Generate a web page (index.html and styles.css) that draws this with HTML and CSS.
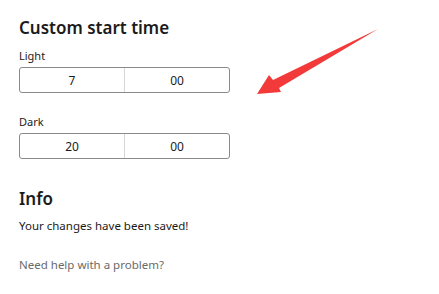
FILE: index.html
```html
<!DOCTYPE html>
<html>
<head>
<meta charset="utf-8">
<link rel="stylesheet" href="styles.css">
</head>
<body>
<div class="page">
  <h2 class="title">Custom start time</h2>
  <div class="label">Light</div>
  <div class="picker"><div class="cell">7</div><div class="cell">00</div></div>
  <div class="label second">Dark</div>
  <div class="picker"><div class="cell">20</div><div class="cell">00</div></div>
  <h2 class="title info">Info</h2>
  <p class="saved">Your changes have been saved!</p>
  <p class="help">Need help with a problem?</p>
</div>
<svg class="arrow" width="439" height="294" viewBox="0 0 439 294">
  <polygon fill="#f23a3a" points="257,94 269,75 273,80 378,29 279,88 281,92"/>
</svg>
</body>
</html>
```
FILE: styles.css
```css
html, body { margin: 0; padding: 0; background: #fff; }
body { width: 439px; height: 294px; overflow: hidden; position: relative; font-family: "Noto Sans", "Open Sans", sans-serif; color: #1b1b1b; }
.page { padding: 16px 0 0 19px; }
.title { margin: 0; font-size: 17px; font-weight: 600; line-height: 24px; }
.label { font-size: 11px; line-height: 14px; margin-top: 9px; margin-bottom: 4px; }
.label.second { margin-top: 22px; }
.picker { display: flex; width: 209px; height: 24px; border: 1px solid #8a8a8a; border-radius: 3px; }
.cell { flex: 1; display: flex; align-items: center; justify-content: center; font-size: 12px; }
.cell + .cell { border-left: 1px solid #d6d6d6; }
.info { margin-top: 28px; }
.saved { margin: 7px 0 0; font-size: 11.5px; line-height: 16px; }
.help { margin: 23px 0 0; font-size: 11.5px; line-height: 16px; color: #6a6a6a; }
.arrow { position: absolute; left: 0; top: 0; }
```
